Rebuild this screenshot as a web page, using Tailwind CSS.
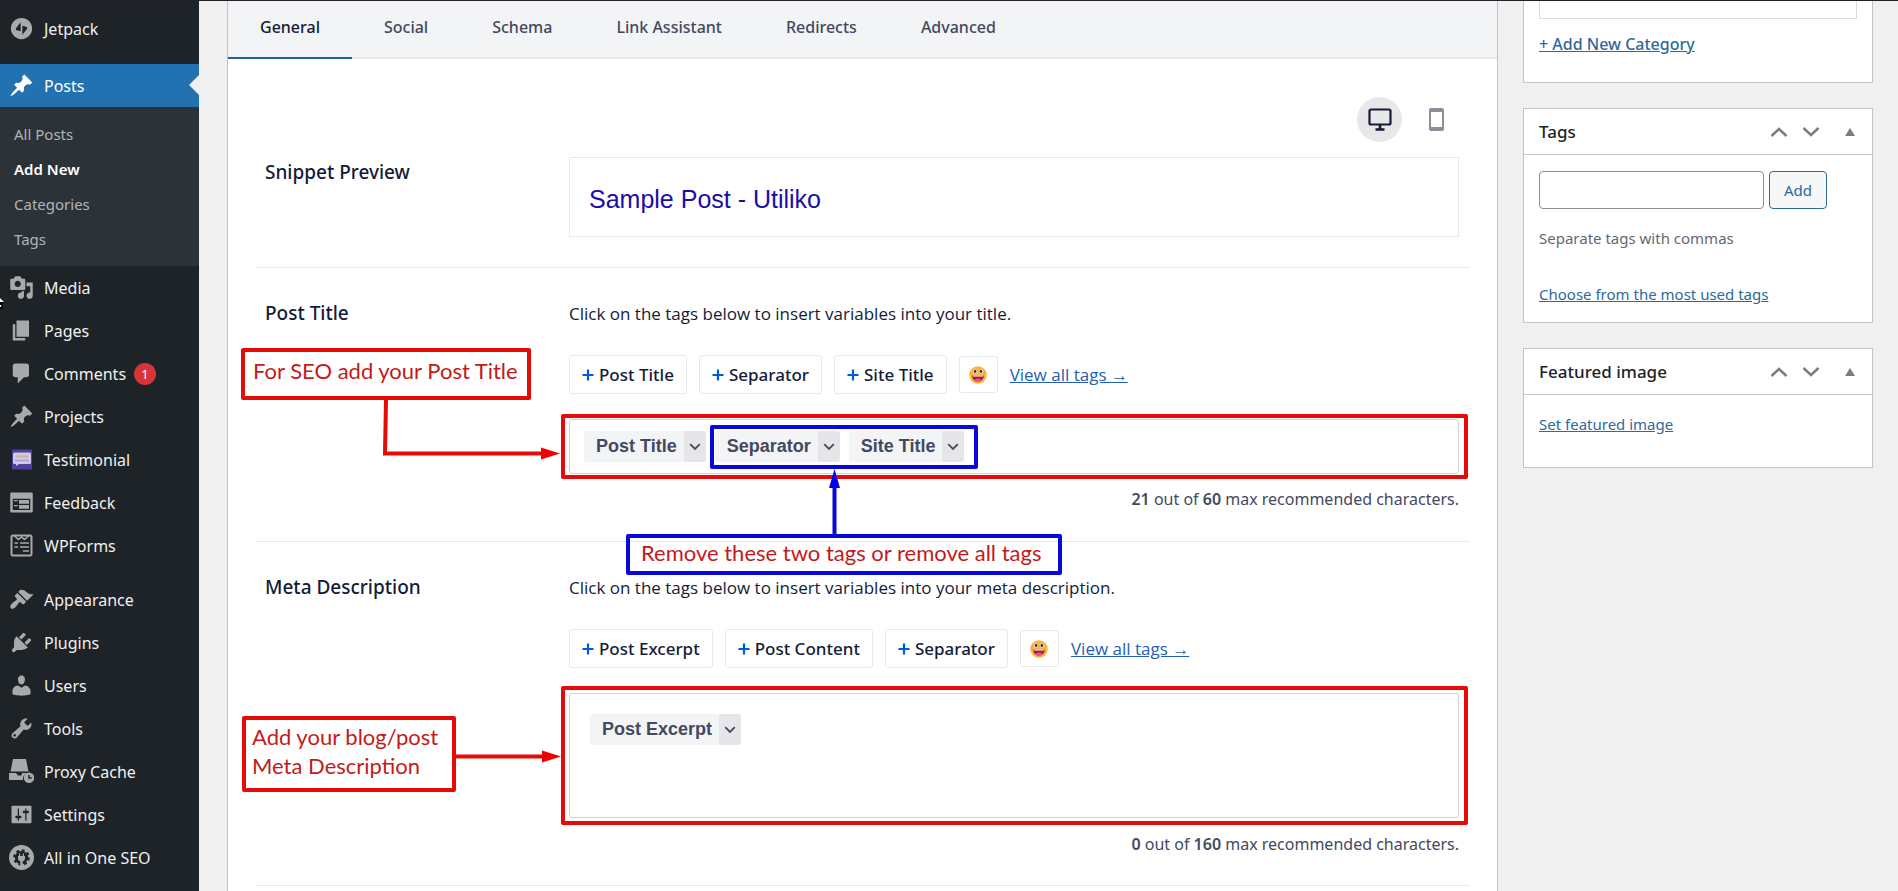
<!DOCTYPE html>
<html lang="en">
<head>
  <meta charset="UTF-8">
  <meta name="viewport" content="width=device-width, initial-scale=1.0">
  <title>Add New Post</title>
  <script src="https://cdn.jsdelivr.net/npm/@tailwindcss/browser@4"></script>
</head>
<body class="flex min-h-screen border-t border-[#231f29] bg-[#f0f0f1] font-['Noto_Sans',sans-serif] text-[#1d2327]">

  <!-- shared shapes -->
  <svg class="hidden" aria-hidden="true">
    <symbol id="pin" viewBox="0 0 20 20"><path d="M10.44 3.02l1.82-1.82 6.36 6.35-1.83 1.82c-1.05-.68-2.48-.57-3.41.36l-.75.75c-.92.93-1.04 2.35-.35 3.41l-1.83 1.82-2.41-2.41-2.8 2.79c-.42.42-3.38 2.71-3.8 2.29s1.86-3.39 2.28-3.81l2.79-2.79L4.1 9.36l1.83-1.82c1.05.69 2.48.57 3.4-.36l.75-.75c.93-.92 1.05-2.35.36-3.41z"/></symbol>
    <symbol id="chevron" viewBox="0 0 12 8"><path d="M1.2 1.2L6 6l4.800-4.800" fill="none" stroke="currentColor" stroke-width="1.800"/></symbol>
    <symbol id="plus" viewBox="0 0 12 12"><path d="M6 .5v11M.5 6h11" stroke="currentColor" stroke-width="2.200"/></symbol>
    <symbol id="smile" viewBox="0 0 18 18">
      <circle cx="9" cy="9" r="8.700" fill="#f9b23d"/>
      <circle cx="6" cy="5.500" r="2.100" fill="#fff"/><circle cx="12" cy="5.500" r="2.100" fill="#fff"/>
      <circle cx="6.100" cy="5.500" r="1.400" fill="#3b2a1f"/><circle cx="11.900" cy="5.500" r="1.400" fill="#3b2a1f"/>
      <path d="M3.200 9.400h11.600c0 3.600-2.500 6-5.800 6s-5.800-2.400-5.800-6z" fill="#9c1f3c"/>
      <path d="M3.600 9.400h10.800l-.5 1.200H4.100z" fill="#fff"/>
      <path d="M5.500 13.700c2-1.500 5-1.500 7 0-2 2.100-5 2.100-7 0z" fill="#ef4f87"/>
    </symbol>
    <symbol id="up" viewBox="0 0 18 10"><path d="M1.500 9L9 2l7.500 7" fill="none" stroke="currentColor" stroke-width="2.400"/></symbol>
    <symbol id="down" viewBox="0 0 18 10"><path d="M1.500 1L9 8l7.500-7" fill="none" stroke="currentColor" stroke-width="2.400"/></symbol>
  </svg>

  <!-- admin menu -->
  <nav aria-label="Main menu" class="relative w-[199px] shrink-0 bg-[#1d2327] pt-[6px] text-[16px] leading-[44px] text-[#f0f0f1]">
    <a href="#" class="flex h-[43px] items-center gap-[10px] pl-[9px]">
      <svg class="size-[25px] fill-[#a7aaad]" viewBox="0 0 20 20"><path fill-rule="evenodd" d="M10 1.500a8.500 8.500 0 1 0 0 17 8.500 8.500 0 0 0 0-17zM9.300 5v7.200l-2.900-.8c-.9-.2-1.200-.8-.8-1.600zM10.700 15V7.800l2.900.8c.9.2 1.200.8.8 1.600z"/></svg>
      Jetpack
    </a>
    <div class="mt-[14px]">
      <a href="#" aria-current="true" class="relative flex h-[43px] items-center gap-[10px] bg-[#2271b1] pl-[9px] text-white">
        <svg class="size-[25px] fill-white"><use href="#pin"/></svg>
        Posts
        <span class="absolute right-0 top-[11px] border-y-[10px] border-r-[10px] border-y-transparent border-r-[#f0f0f1]"></span>
      </a>
      <ul class="bg-[#2c3338] pt-[10px] pb-[9px] pl-[14px] text-[15px] leading-[35px] text-[#b1b5b9]">
        <li><a href="#">All Posts</a></li>
        <li><a href="#" class="font-semibold text-white">Add New</a></li>
        <li><a href="#">Categories</a></li>
        <li><a href="#">Tags</a></li>
      </ul>
    </div>
    <a href="#" class="flex h-[43px] items-center gap-[10px] pl-[9px]">
      <svg class="size-[25px] fill-[#a7aaad]" viewBox="0 0 20 20"><path d="M13 11V4c0-.55-.45-1-1-1h-1.670L9 1H5L3.670 3H2c-.55 0-1 .45-1 1v7c0 .55.45 1 1 1h10c.55 0 1-.45 1-1zM7 4.500c1.380 0 2.500 1.120 2.500 2.500S8.380 9.500 7 9.500 4.500 8.380 4.500 7 5.620 4.500 7 4.500zM14 6h5v10.500c0 1.380-1.120 2.500-2.500 2.500S14 17.880 14 16.500s1.120-2.500 2.500-2.500c.17 0 .34.02.5.05V9h-3V6zm-4 8.050V13h2v3.500c0 1.380-1.120 2.500-2.500 2.500S7 17.880 7 16.500 8.120 14 9.500 14c.17 0 .34.02.5.05z"/></svg>
      Media
    </a>
    <a href="#" class="flex h-[43px] items-center gap-[10px] pl-[9px]">
      <svg class="size-[25px] fill-[#a7aaad]" viewBox="0 0 20 20"><path d="M6 15V2h10v13H6zm-1 1h8v2H3V5h2v11z"/></svg>
      Pages
    </a>
    <a href="#" class="flex h-[43px] items-center gap-[10px] pl-[9px]">
      <svg class="size-[25px] fill-[#a7aaad]" viewBox="0 0 20 20"><path d="M5 2h9c1.100 0 2 .9 2 2v7c0 1.100-.9 2-2 2h-2l-5 5v-5H5c-1.100 0-2-.9-2-2V4c0-1.100.9-2 2-2z"/></svg>
      Comments
      <span class="-ml-[2px] size-[22px] rounded-full bg-[#d63638] text-center text-[13px] leading-[22px] text-white">1</span>
    </a>
    <a href="#" class="flex h-[43px] items-center gap-[10px] pl-[9px]">
      <svg class="size-[25px] fill-[#a7aaad]"><use href="#pin"/></svg>
      Projects
    </a>
    <a href="#" class="flex h-[43px] items-center gap-[10px] pl-[9px]">
      <svg class="size-[25px]" viewBox="0 0 25 25"><path fill="#4f3fa0" d="M3 2.500h20v20H3z"/><path fill="#cfcbe6" d="M5.500 5.500h15a1.500 1.500 0 0 1 1.500 1.500v8.500a1.500 1.500 0 0 1-1.500 1.500H10l-3 2v-2H5.500A1.500 1.500 0 0 1 4 15.500V7a1.500 1.500 0 0 1 1.500-1.500z"/><path d="M7 9.500h12" stroke="#e0a878" stroke-width="2" stroke-dasharray="2 .5"/><path d="M6 13.500h14" stroke="#a69fd0" stroke-width="1.500"/></svg>
      Testimonial
    </a>
    <a href="#" class="flex h-[43px] items-center gap-[10px] pl-[9px]">
      <svg class="size-[25px] fill-[#a7aaad]" viewBox="0 0 20 20"><path d="M2 2h16c.55 0 1 .45 1 1v14c0 .55-.45 1-1 1H2c-.55 0-1-.45-1-1V3c0-.55.45-1 1-1zm15 14V7H3v9h14zM4 8v1h3V8H4zm4 0v3h8V8H8zm-4 4v1h3v-1H4zm4 0v3h8v-3H8z"/></svg>
      Feedback
    </a>
    <a href="#" class="flex h-[43px] items-center gap-[10px] pl-[9px]">
      <svg class="size-[25px] fill-none stroke-[#a7aaad]" viewBox="0 0 25 25"><rect x="2.500" y="2.500" width="20" height="20" rx="1.500" stroke-width="2"/><path stroke-width="1.500" d="M5.500 3l4 3.500 3-2.500 3 2.500 4-3.500M5.500 10h3.500M11 10h9M5.500 14h3.500M11 14h9M14 18h6"/></svg>
      WPForms
    </a>
    <a href="#" class="mt-[11px] flex h-[43px] items-center gap-[10px] pl-[9px]">
      <svg class="size-[25px] fill-[#a7aaad]" viewBox="0 0 20 20"><path d="M14.480 11.060L7.410 3.990l1.500-1.500c.5-.56 2.300-.47 3.510.32 1.210.8 1.430 1.280 2.910 2.100 1.180.64 2.450 1.260 4.450.85zm-.71.71L6.700 4.700 4.930 6.470c-.39.39-.39 1.020 0 1.410l1.060 1.060c.39.39.39 1.030 0 1.420-.6.6-1.430 1.110-2.210 1.690-.35.26-.7.53-1.010.84C1.430 14.230.4 16.080 1.400 17.070c.99 1 2.840-.03 4.180-1.360.31-.31.58-.66.85-1.020.57-.78 1.080-1.610 1.690-2.210.39-.39 1.020-.39 1.410 0l1.060 1.060c.39.39 1.020.39 1.410 0z"/></svg>
      Appearance
    </a>
    <a href="#" class="flex h-[43px] items-center gap-[10px] pl-[9px]">
      <svg class="size-[25px] fill-[#a7aaad]" viewBox="0 0 20 20"><path d="M13.110 4.360L9.870 7.600 8 5.730l3.240-3.240c.35-.34 1.050-.2 1.560.32.52.51.66 1.210.31 1.550zm-8 1.770l.91-1.120 9.010 9.010-1.190.84c-.71.71-2.630 1.160-3.820 1.160H6.140L4.900 17.260c-.59.59-1.540.59-2.120 0-.59-.58-.59-1.530 0-2.120l1.240-1.240v-3.880c0-1.130.4-3.190 1.090-3.890zm7.260 3.970l3.240-3.240c.34-.35 1.040-.21 1.550.31.52.51.66 1.210.31 1.550l-3.240 3.250z"/></svg>
      Plugins
    </a>
    <a href="#" class="flex h-[43px] items-center gap-[10px] pl-[9px]">
      <svg class="size-[25px] fill-[#a7aaad]" viewBox="0 0 20 20"><path d="M10 9.250c-2.270 0-2.730-3.440-2.730-3.440C7 4.020 7.820 2 9.970 2c2.160 0 2.980 2.020 2.710 3.810 0 0-.41 3.440-2.680 3.440zm0 2.570L12.720 10c2.390 0 4.520 2.330 4.520 4.530v2.490s-3.650 1.130-7.240 1.130c-3.650 0-7.240-1.130-7.240-1.130v-2.490c0-2.250 1.940-4.480 4.470-4.480z"/></svg>
      Users
    </a>
    <a href="#" class="flex h-[43px] items-center gap-[10px] pl-[9px]">
      <svg class="size-[25px] fill-[#a7aaad]" viewBox="0 0 20 20"><path d="M16.680 9.770c-1.340 1.340-3.300 1.670-4.950.99l-5.410 6.520c-.99.99-2.590.99-3.580 0s-.99-2.590 0-3.570l6.520-5.420c-.68-1.650-.35-3.610.99-4.950 1.280-1.280 3.120-1.620 4.720-1.060l-2.890 2.890 2.820 2.820 2.860-2.870c.53 1.580.18 3.390-1.080 4.650zM3.810 16.210c.4.39 1.040.39 1.430 0 .4-.4.4-1.040 0-1.430-.39-.4-1.030-.4-1.430 0-.39.39-.39 1.030 0 1.430z"/></svg>
      Tools
    </a>
    <a href="#" class="flex h-[43px] items-center gap-[10px] pl-[9px]">
      <svg class="size-[25px] fill-[#a7aaad]" viewBox="0 0 25 25"><path d="M4 0h13l2.500 12.500H1.500zM0 14h7l2 2.500h3l1.500-2.500H20a6 6 0 0 0-6 7H0z"/><path fill-rule="evenodd" d="M20 13.500a5.200 5.200 0 1 0 0 10.400 5.200 5.200 0 0 0 0-10.400zM19.200 16h1.500v2.300h2v1.500h-3.500z"/></svg>
      Proxy Cache
    </a>
    <a href="#" class="flex h-[43px] items-center gap-[10px] pl-[9px]">
      <svg class="size-[25px] fill-[#a7aaad]" viewBox="0 0 20 20"><path d="M18 16V4c0-.55-.45-1-1-1H3c-.55 0-1 .45-1 1v12c0 .55.45 1 1 1h14c.55 0 1-.45 1-1zM8 11h1c.55 0 1 .45 1 1s-.45 1-1 1H8v1.500c0 .28-.22.5-.5.5s-.5-.22-.5-.5V13H6c-.55 0-1-.45-1-1s.45-1 1-1h1V5.500c0-.28.22-.5.5-.5s.5.22.5.5V11zm5-2h-1c-.55 0-1-.45-1-1s.45-1 1-1h1V5.500c0-.28.22-.5.5-.5s.5.22.5.5V7h1c.55 0 1 .45 1 1s-.45 1-1 1h-1v5.500c0 .28-.22.5-.5.5s-.5-.22-.5-.5V9z"/></svg>
      Settings
    </a>
    <a href="#" class="flex h-[43px] items-center gap-[10px] pl-[9px]">
      <svg class="size-[25px]" viewBox="0 0 25 25"><circle cx="12.500" cy="12.500" r="12.500" fill="#a7aaad"/><circle cx="12.500" cy="12.500" r="6.600" fill="#1d2327"/><circle cx="12.500" cy="12.500" r="7.200" fill="none" stroke="#1d2327" stroke-width="2.200" stroke-dasharray="2.900 2.755"/><path fill="#a7aaad" d="M10 8.500h1.200V11h2.600V8.500H15V11h1v2.500c0 1.500-1 2.500-2.300 2.800V24h-2.400v-7.700C10 16 9 15 9 13.500V11h1z"/></svg>
      All in One SEO
    </a>
    <!-- pointer entering from the left edge -->
    <svg class="absolute left-0 top-[293px] h-4 w-[5px]" viewBox="0 0 5 16"><path d="M0 8h3v6l-1.500 1.500L0 14z" fill="#000"/><path d="M0 4l4 4H0zM0 11h1.200v2H0z" fill="#fff"/></svg>
  </nav>

  <main class="flex min-w-0 flex-1 gap-[25px] pl-7 pr-[25px]">

    <!-- SEO settings -->
    <div class="min-w-0 flex-1 border-x border-[#c3c4c7] bg-white">
      <div role="tablist" class="flex h-[58px] border-b-2 border-[#e8e8eb] bg-[#f3f4f5] text-[16px] font-medium leading-[50px] text-[#434960]">
        <button role="tab" aria-selected="true" class="h-[58px] border-b-2 border-[#1b6593] px-8 pb-1 text-[#141b38]">General</button>
        <button role="tab" class="h-[58px] px-8 pb-[6px]">Social</button>
        <button role="tab" class="h-[58px] px-8 pb-[6px]">Schema</button>
        <button role="tab" class="h-[58px] px-8 pb-[6px]">Link Assistant</button>
        <button role="tab" class="h-[58px] px-8 pb-[6px]">Redirects</button>
        <button role="tab" class="h-[58px] px-8 pb-[6px]">Advanced</button>
      </div>

      <section class="mx-[27px] border-b border-[#e8e8eb] pb-[30px] pl-[10px] pr-[11px] pt-[38px]">
        <div class="flex items-center justify-end gap-[27px] pr-[15px]">
          <button aria-label="Desktop preview" class="flex size-[45px] items-center justify-center rounded-full bg-[#e8e8eb]">
            <svg class="h-[23px] w-[24px] text-[#141b38]" viewBox="0 0 24 23" fill="none" stroke="currentColor"><rect x="1.500" y="1.500" width="21" height="15" rx="1.500" stroke-width="2.200"/><path d="M12 17v4M7.500 21.500h9" stroke-width="2.600"/></svg>
          </button>
          <button aria-label="Mobile preview">
            <svg class="h-[23px] w-[15px]" viewBox="0 0 15 23"><path fill="#8c8f9a" fill-rule="evenodd" d="M2 0h11a2 2 0 0 1 2 2v19a2 2 0 0 1-2 2H2a2 2 0 0 1-2-2V2a2 2 0 0 1 2-2zm0 4v15h11V4z"/></svg>
          </button>
        </div>
        <div class="mt-[15px] grid grid-cols-[304px_1fr]">
          <h3 class="text-[19px] font-medium leading-[30px] text-[#141b38]">Snippet Preview</h3>
          <div class="border border-[#e8e8eb] px-[19px] pb-[21px] pt-[25px] font-['Liberation_Sans',sans-serif] text-[25px] leading-[32px] text-[#1a0dab]">Sample Post - Utiliko</div>
        </div>
      </section>

      <section class="relative mx-[27px] grid grid-cols-[304px_1fr] border-b border-[#e8e8eb] pb-7 pl-[10px] pr-[11px] pt-8 text-[16px] leading-[28px] text-[#141b38]">
        <h3 class="text-[19px] font-medium leading-[26px]">Post Title</h3>
        <div class="min-w-0">
          <p class="font-['Open_Sans',sans-serif] text-[17px]">Click on the tags below to insert variables into your title.</p>
          <div class="mt-[27px] flex items-center gap-3 text-[17px] font-medium">
            <button class="flex h-[39px] items-center gap-[5px] rounded-[3px] border border-[#e8e8eb] px-3"><svg class="size-3 text-[#005ae0]"><use href="#plus"/></svg>Post Title</button>
            <button class="flex h-[39px] items-center gap-[5px] rounded-[3px] border border-[#e8e8eb] px-3"><svg class="size-3 text-[#005ae0]"><use href="#plus"/></svg>Separator</button>
            <button class="flex h-[39px] items-center gap-[5px] rounded-[3px] border border-[#e8e8eb] px-3"><svg class="size-3 text-[#005ae0]"><use href="#plus"/></svg>Site Title</button>
            <button aria-label="Insert emoji" class="flex h-[37px] w-[39px] items-center justify-center rounded-[3px] border border-[#e8e8eb]"><svg class="size-[18px]"><use href="#smile"/></svg></button>
            <a href="#" class="font-['Open_Sans',sans-serif] font-normal text-[#2360b5] underline">View all tags →</a>
          </div>
          <div class="relative mt-[25px] rounded-[3px] border border-[#d0d1d7]">
            <div role="textbox" aria-label="Post Title" class="flex gap-[9px] px-[14px] py-[11px] font-['Liberation_Sans',sans-serif] text-[18px] font-bold leading-[31px] text-[#434960]">
              <button class="flex rounded-[3px] bg-[#f3f4f5] pl-3">Post Title<span class="ml-[7px] flex w-[22px] items-center justify-center rounded-r-[3px] bg-[#e6e6ea]"><svg class="h-2 w-3"><use href="#chevron"/></svg></span></button>
              <button class="flex rounded-[3px] bg-[#f3f4f5] pl-3">Separator<span class="ml-[7px] flex w-[22px] items-center justify-center rounded-r-[3px] bg-[#e6e6ea]"><svg class="h-2 w-3"><use href="#chevron"/></svg></span></button>
              <button class="flex rounded-[3px] bg-[#f3f4f5] pl-3">Site Title<span class="ml-[7px] flex w-[22px] items-center justify-center rounded-r-[3px] bg-[#e6e6ea]"><svg class="h-2 w-3"><use href="#chevron"/></svg></span></button>
            </div>
            <div class="absolute -inset-y-[6px] -left-[9px] -right-[10px] rounded-[2px] border-4 border-[#e60b0b]"></div>
            <div class="absolute left-[140px] top-[5px] h-[44px] w-[268px] rounded-[2px] border-4 border-[#0808d8]"></div>
          </div>
          <p class="mt-[11px] text-right text-[#434960]"><b class="font-semibold">21</b> out of <b class="font-semibold">60</b> max recommended characters.</p>
        </div>

        <!-- callouts -->
        <p class="absolute left-[-14px] top-[80px] h-[52px] w-[290px] rounded-[2px] border-4 border-[#e60b0b] pl-2 font-['Lato',sans-serif] text-[22px] leading-[38px] text-[#c41a1a]">For SEO add your Post Title</p>
        <svg class="absolute left-[124px] top-[132px] h-[62px] w-[182px]" viewBox="0 0 182 62"><path d="M7 0L6 53.500h160" fill="none" stroke="#e60b0b" stroke-width="4"/><path d="M162 47.500l19 6-19 6z" fill="#f00000"/></svg>
        <p class="absolute left-[371px] top-[266px] z-10 h-[41px] w-[436px] rounded-[2px] border-4 border-[#0808d8] pl-[11px] font-['Lato',sans-serif] text-[22px] leading-[30px] text-[#c41a1a]">Remove these two tags or remove all tags</p>
        <svg class="absolute left-[573px] top-[201px] h-[66px] w-[13px]" viewBox="0 0 13 66"><path d="M6.500 14v52" stroke="#0808d8" stroke-width="4"/><path d="M6.500 0L12 19H1z" fill="#0000f0"/></svg>
      </section>

      <section class="relative mx-[27px] grid grid-cols-[304px_1fr] border-b border-[#e8e8eb] pb-[27px] pl-[10px] pr-[11px] pt-8 text-[16px] leading-[28px] text-[#141b38]">
        <h3 class="text-[19px] font-medium leading-[26px]">Meta Description</h3>
        <div class="min-w-0">
          <p class="font-['Open_Sans',sans-serif] text-[17px]">Click on the tags below to insert variables into your meta description.</p>
          <div class="mt-[27px] flex items-center gap-3 text-[17px] font-medium">
            <button class="flex h-[39px] items-center gap-[5px] rounded-[3px] border border-[#e8e8eb] px-3"><svg class="size-3 text-[#005ae0]"><use href="#plus"/></svg>Post Excerpt</button>
            <button class="flex h-[39px] items-center gap-[5px] rounded-[3px] border border-[#e8e8eb] px-3"><svg class="size-3 text-[#005ae0]"><use href="#plus"/></svg>Post Content</button>
            <button class="flex h-[39px] items-center gap-[5px] rounded-[3px] border border-[#e8e8eb] px-3"><svg class="size-3 text-[#005ae0]"><use href="#plus"/></svg>Separator</button>
            <button aria-label="Insert emoji" class="flex h-[37px] w-[39px] items-center justify-center rounded-[3px] border border-[#e8e8eb]"><svg class="size-[18px]"><use href="#smile"/></svg></button>
            <a href="#" class="font-['Open_Sans',sans-serif] font-normal text-[#2360b5] underline">View all tags →</a>
          </div>
          <div class="relative mt-[25px] rounded-[3px] border border-[#d0d1d7]">
            <div role="textbox" aria-label="Meta Description" class="flex min-h-[123px] items-start px-5 py-5 font-['Liberation_Sans',sans-serif] text-[18px] font-bold leading-[31px] text-[#434960]">
              <button class="flex rounded-[3px] bg-[#f3f4f5] pl-3">Post Excerpt<span class="ml-[7px] flex w-[22px] items-center justify-center self-stretch rounded-r-[3px] bg-[#e6e6ea]"><svg class="h-2 w-3"><use href="#chevron"/></svg></span></button>
            </div>
            <div class="absolute -inset-y-[8px] -left-[9px] -right-[10px] rounded-[2px] border-4 border-[#e60b0b]"></div>
          </div>
          <p class="mt-3 text-right text-[#434960]"><b class="font-semibold">0</b> out of <b class="font-semibold">160</b> max recommended characters.</p>
        </div>

        <p class="absolute left-[-13px] top-[174px] h-[76px] w-[214px] rounded-[2px] border-4 border-[#e60b0b] pl-[6px] pt-[2px] font-['Lato',sans-serif] text-[22px] leading-[29px] text-[#c41a1a]">Add your blog/post<br>Meta Description</p>
        <svg class="absolute left-[200px] top-[208px] h-[13px] w-[106px]" viewBox="0 0 106 13"><path d="M0 6.500h90" stroke="#e60b0b" stroke-width="4"/><path d="M87 .5l19 6-19 6z" fill="#f00000"/></svg>
      </section>
    </div>

    <!-- side boxes -->
    <aside class="flex w-[350px] shrink-0 flex-col gap-[25px] text-[15px] leading-[24px] text-[#646970]">
      <div class="h-[82px] border border-t-0 border-[#c3c4c7] bg-white px-[15px]">
        <div class="h-[18px] border border-t-0 border-[#dcdcde]"></div>
        <a href="#" class="mt-[13px] block text-[16px] font-medium text-[#2c6a9b] underline">+ Add New Category</a>
      </div>

      <section class="border border-[#c3c4c7] bg-white">
        <header class="flex h-[46px] items-center border-b border-[#c3c4c7] px-[15px]">
          <h2 class="flex-1 text-[17px] font-medium text-[#1d2327]">Tags</h2>
          <div class="flex items-center text-[#787c82]">
            <button aria-label="Move up"><svg class="h-[10px] w-[18px]"><use href="#up"/></svg></button>
            <button aria-label="Move down" class="ml-[14px]"><svg class="h-[10px] w-[18px]"><use href="#down"/></svg></button>
            <button aria-label="Toggle panel" class="ml-[25px] mr-[2px] border-x-[5px] border-b-[8px] border-x-transparent border-b-[#787c82]"></button>
          </div>
        </header>
        <div class="px-[15px] pb-4 pt-4">
          <div class="flex gap-[5px]">
            <input type="text" aria-label="Add new tag" class="h-[38px] w-[225px] rounded-[4px] border border-[#8c8f94] px-2 text-[#2c3338]">
            <button class="h-[38px] rounded-[4px] border border-[#2c6a9b] bg-[#f6f7f7] px-[14px] text-[#2c6a9b]">Add</button>
          </div>
          <p class="mt-[17px]">Separate tags with commas</p>
          <a href="#" class="mt-8 block text-[#2c6a9b] underline">Choose from the most used tags</a>
        </div>
      </section>

      <section class="border border-[#c3c4c7] bg-white">
        <header class="flex h-[46px] items-center border-b border-[#c3c4c7] px-[15px]">
          <h2 class="flex-1 text-[17px] font-medium text-[#1d2327]">Featured image</h2>
          <div class="flex items-center text-[#787c82]">
            <button aria-label="Move up"><svg class="h-[10px] w-[18px]"><use href="#up"/></svg></button>
            <button aria-label="Move down" class="ml-[14px]"><svg class="h-[10px] w-[18px]"><use href="#down"/></svg></button>
            <button aria-label="Toggle panel" class="ml-[25px] mr-[2px] border-x-[5px] border-b-[8px] border-x-transparent border-b-[#787c82]"></button>
          </div>
        </header>
        <div class="px-[15px] pb-[31px] pt-[17px]">
          <a href="#" class="text-[#2c6a9b] underline">Set featured image</a>
        </div>
      </section>
    </aside>
  </main>
</body>
</html>
